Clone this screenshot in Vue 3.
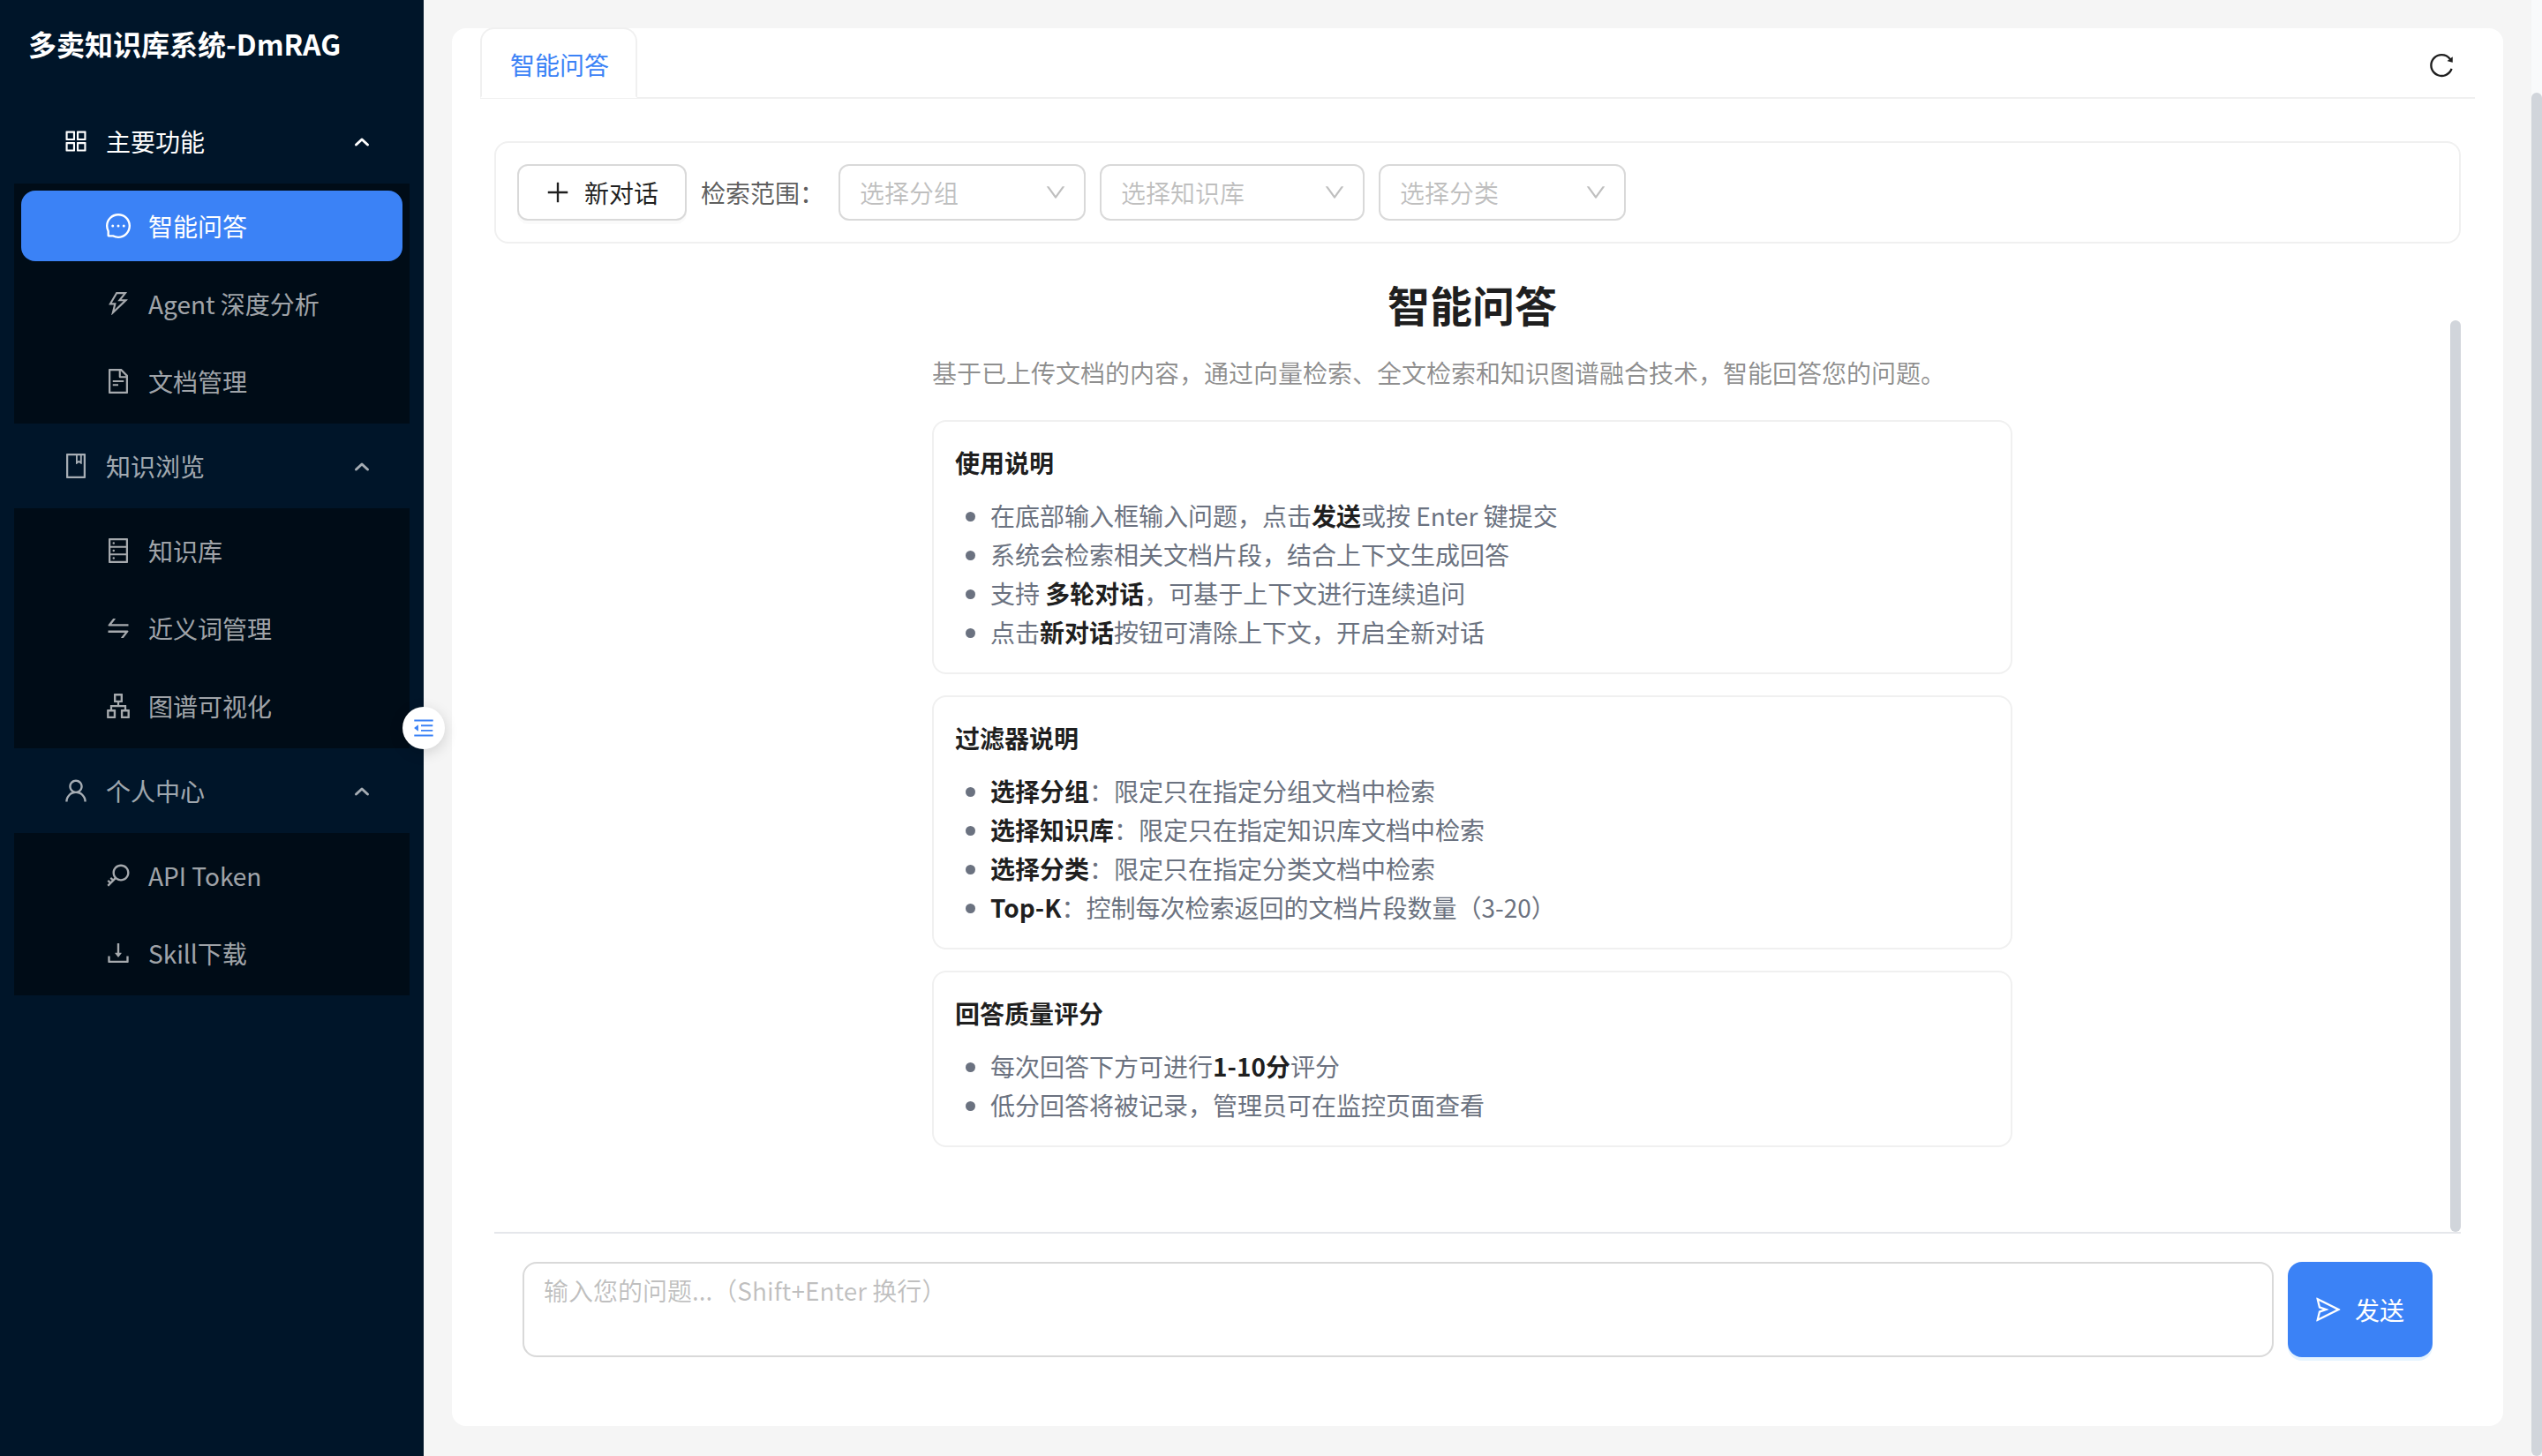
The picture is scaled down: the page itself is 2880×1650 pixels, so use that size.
<script setup>
const icons = {
  appstore: 'M464 144H160c-8.8 0-16 7.2-16 16v304c0 8.8 7.2 16 16 16h304c8.8 0 16-7.2 16-16V160c0-8.8-7.2-16-16-16zm-52 268H212V212h200v200zm452-268H560c-8.8 0-16 7.2-16 16v304c0 8.8 7.2 16 16 16h304c8.8 0 16-7.2 16-16V160c0-8.8-7.2-16-16-16zm-52 268H612V212h200v200zM464 544H160c-8.8 0-16 7.2-16 16v304c0 8.8 7.2 16 16 16h304c8.8 0 16-7.2 16-16V560c0-8.8-7.2-16-16-16zm-52 268H212V612h200v200zm452-268H560c-8.8 0-16 7.2-16 16v304c0 8.8 7.2 16 16 16h304c8.8 0 16-7.2 16-16V560c0-8.8-7.2-16-16-16zm-52 268H612V612h200v200z',
  message: 'M464 512a48 48 0 1096 0 48 48 0 10-96 0zm200 0a48 48 0 1096 0 48 48 0 10-96 0zm-400 0a48 48 0 1096 0 48 48 0 10-96 0zm661.2-173.6c-22.6-53.7-55-101.9-96.3-143.3a444.35 444.35 0 00-143.3-96.3C630.6 75.7 572.2 64 512 64h-2c-60.6.3-119.3 12.3-174.5 35.9a445.35 445.35 0 00-142 96.5c-40.9 41.3-73 89.3-95.2 142.8-23 55.4-34.6 114.3-34.3 174.9A449.4 449.4 0 00112 714v152a46 46 0 0046 46h152.1A449.4 449.4 0 00510 960h2.1c59.9 0 118-11.6 172.7-34.3a444.48 444.48 0 00142.8-95.2c41.3-40.9 73.8-88.7 96.5-142 23.6-55.2 35.6-113.9 35.9-174.5.3-60.9-11.5-120-34.8-175.6zm-151.1 438C704 845.8 611 884 512 884h-1.7c-60.3-.3-120.2-15.3-173.1-43.5l-8.4-4.5H188V695.2l-4.5-8.4C155.3 633.9 140.3 574 140 513.7c-.4-99.7 37.7-193.3 107.6-263.8 69.8-70.5 163.1-109.5 262.8-109.9h1.7c50 0 98.5 9.7 144.2 28.9 44.6 18.7 84.6 45.6 119 80 34.3 34.3 61.3 74.4 80 119 19.4 46.2 29.1 95.2 28.9 145.8-.6 99.6-39.7 192.9-110.1 262.7z',
  thunder: 'M848 359.3H627.7L825.8 109c4.1-5.3.4-13-6.3-13H436c-2.8 0-5.5 1.5-6.9 4L170 547.5c-3.1 5.3.7 12 6.9 12h174.4l-89.4 357.6c-1.9 7.8 7.5 13.3 13.3 7.7L853.5 373c5.2-4.9 1.7-13.7-5.5-13.7zM378.2 732.5l60.3-241H281.1l189.6-327.4h224.6L487 427.4h211L378.2 732.5z',
  file: 'M854.6 288.6L639.4 73.4c-6-6-14.1-9.4-22.6-9.4H192c-17.7 0-32 14.3-32 32v832c0 17.7 14.3 32 32 32h640c17.7 0 32-14.3 32-32V311.3c0-8.5-3.4-16.7-9.4-22.7zM790.2 326H602V137.8L790.2 326zm1.8 562H232V136h302v216a42 42 0 0042 42h216v494zM504 618H320c-4.4 0-8 3.6-8 8v48c0 4.4 3.6 8 8 8h184c4.4 0 8-3.6 8-8v-48c0-4.4-3.6-8-8-8zM312 490v48c0 4.4 3.6 8 8 8h384c4.4 0 8-3.6 8-8v-48c0-4.4-3.6-8-8-8H320c-4.4 0-8 3.6-8 8z',
  book: 'M832 64H192c-17.7 0-32 14.3-32 32v832c0 17.7 14.3 32 32 32h640c17.7 0 32-14.3 32-32V96c0-17.7-14.3-32-32-32zm-260 72h96v209.9L621.5 312 572 347.4V136zm220 752H232V136h280v296.9c0 3.3 1 6.6 3 9.3a15.9 15.9 0 0022.3 3.7l83.8-59.9 81.4 59.4c2.7 2 6 3.1 9.4 3.1 8.8 0 16-7.2 16-16V136h64v752z',
  database: 'M832 64H192c-17.7 0-32 14.3-32 32v832c0 17.7 14.3 32 32 32h640c17.7 0 32-14.3 32-32V96c0-17.7-14.3-32-32-32zm-600 72h560v208H232V136zm560 480H232V408h560v208zm0 272H232V680h560v208zM304 240a40 40 0 1080 0 40 40 0 10-80 0zm0 272a40 40 0 1080 0 40 40 0 10-80 0zm0 272a40 40 0 1080 0 40 40 0 10-80 0z',
  swap: 'M847.9 592H152c-4.4 0-8 3.6-8 8v60c0 4.4 3.6 8 8 8h605.2L612.9 851c-4.1 5.2-.4 13 6.3 13h72.5c4.9 0 9.5-2.2 12.6-6.1l168.8-214.1c16.5-21 1.6-51.8-25.2-51.8zM872 356H266.8l144.3-183c4.1-5.2.4-13-6.3-13h-72.5c-4.9 0-9.5 2.2-12.6 6.1L150.9 380.2c-16.5 21-1.6 51.8 25.1 51.8h696c4.4 0 8-3.6 8-8v-60c0-4.4-3.6-8-8-8z',
  apartment: 'M908 640H804V488c0-4.4-3.6-8-8-8H548v-96h108c8.8 0 16-7.2 16-16V80c0-8.8-7.2-16-16-16H368c-8.8 0-16 7.2-16 16v288c0 8.8 7.2 16 16 16h108v96H228c-4.4 0-8 3.6-8 8v152H116c-8.8 0-16 7.2-16 16v288c0 8.8 7.2 16 16 16h288c8.8 0 16-7.2 16-16V656c0-8.8-7.2-16-16-16H292v-88h440v88H620c-8.8 0-16 7.2-16 16v288c0 8.8 7.2 16 16 16h288c8.8 0 16-7.2 16-16V656c0-8.8-7.2-16-16-16zm-564 76v168H176V716h168zm84-408V140h168v168H428zm420 576H680V716h168v168z',
  user: 'M858.5 763.6a374 374 0 00-80.6-119.5 375.63 375.63 0 00-119.5-80.6c-.4-.2-.8-.3-1.2-.5C719.5 518 760 444.7 760 362c0-137-111-248-248-248S264 225 264 362c0 82.7 40.5 156 102.8 201.1-.4.2-.8.3-1.2.5-44.8 18.9-85 46-119.5 80.6a375.63 375.63 0 00-80.6 119.5A371.7 371.7 0 00136 901.8a8 8 0 008 8.2h60c4.4 0 7.9-3.5 8-7.8 2-77.2 33-149.5 87.8-204.3 56.7-56.7 132-87.9 212.2-87.9s155.5 31.2 212.2 87.9C779 752.7 810 825 812 902.2c.1 4.4 3.6 7.8 8 7.8h60a8 8 0 008-8.2c-1-47.8-10.9-94.3-29.5-138.2zM512 534c-45.9 0-89.1-17.9-121.6-50.4S340 407.9 340 362c0-45.9 17.9-89.1 50.4-121.6S466.1 190 512 190s89.1 17.9 121.6 50.4S684 316.1 684 362c0 45.9-17.9 89.1-50.4 121.6S557.9 534 512 534z',
  key: 'M608 112c-167.9 0-304 136.1-304 304 0 70.3 23.9 135 63.9 186.5l-41.1 41.1-62.3-62.3a8.15 8.15 0 00-11.4 0l-39.8 39.8a8.15 8.15 0 000 11.4l62.3 62.3-44.9 44.9-62.3-62.3a8.15 8.15 0 00-11.4 0l-39.8 39.8a8.15 8.15 0 000 11.4l62.3 62.3-65.3 65.3a8.03 8.03 0 000 11.3l42.3 42.3c3.1 3.1 8.2 3.1 11.3 0l253.6-253.6A304.06 304.06 0 00608 720c167.9 0 304-136.1 304-304S775.9 112 608 112zm161.2 465.2C726.2 620.3 668.9 644 608 644c-60.9 0-118.2-23.7-161.2-66.8-43.1-43-66.8-100.3-66.8-161.2 0-60.9 23.7-118.2 66.8-161.2 43-43.1 100.3-66.8 161.2-66.8 60.9 0 118.2 23.7 161.2 66.8 43.1 43 66.8 100.3 66.8 161.2 0 60.9-23.7 118.2-66.8 161.2z',
  download: 'M505.7 661a8 8 0 0012.6 0l112-141.7c4.1-5.2.4-12.9-6.3-12.9h-74.1V168c0-4.4-3.6-8-8-8h-60c-4.4 0-8 3.6-8 8v338.3H400c-6.7 0-10.4 7.7-6.3 12.9l112 141.8zM878 626h-60c-4.4 0-8 3.6-8 8v154H214V634c0-4.4-3.6-8-8-8h-60c-4.4 0-8 3.6-8 8v198c0 17.7 14.3 32 32 32h684c17.7 0 32-14.3 32-32V634c0-4.4-3.6-8-8-8z',
  down: 'M884 256h-75c-5.1 0-9.9 2.5-12.9 6.6L512 654.2 227.9 262.6c-3-4.1-7.8-6.6-12.9-6.6h-75c-6.5 0-10.3 7.4-6.5 12.7l352.6 486.1c12.8 17.6 39 17.6 51.7 0l352.6-486.1c3.9-5.3.1-12.7-6.4-12.7z',
  plus: 'M482 152h60q8 0 8 8v704q0 8-8 8h-60q-8 0-8-8V160q0-8 8-8zM192 474h672q8 0 8 8v60q0 8-8 8H160q-8 0-8-8v-60q0-8 8-8z',
  reload: 'M909.1 209.3l-56.4 44.1C775.8 155.1 656.2 92 521.9 92 290 92 102.3 279.5 102 511.5 101.7 743.7 289.8 932 521.9 932c181.3 0 335.8-115 394.6-276.1 1.5-4.2-.7-8.9-4.9-10.3l-56.7-19.5a8 8 0 00-10.1 4.8c-1.8 5-3.8 10-5.9 14.9-17.3 41-42.1 77.8-73.7 109.4A344.77 344.77 0 01655.9 829c-42.3 17.9-87.4 27-133.8 27-46.5 0-91.5-9.1-133.8-27A341.5 341.5 0 01279 755.2a342.16 342.16 0 01-73.7-109.4c-17.9-42.4-27-87.4-27-133.9s9.1-91.5 27-133.9c17.3-41 42.1-77.8 73.7-109.4 31.6-31.6 68.4-56.4 109.3-73.8 42.3-17.9 87.4-27 133.8-27 46.5 0 91.5 9.1 133.8 27a341.5 341.5 0 01109.3 73.8c9.9 9.9 19.2 20.4 27.8 31.4l-60.2 47a8 8 0 003 14.1l175.6 43c5 1.2 9.9-2.6 9.9-7.7l.8-180.9c-.1-6.6-7.8-10.3-13-6.2z',
  send: 'M931.4 498.9L94.9 79.5c-3.4-1.7-7.3-2.1-11-1.2a15.99 15.99 0 00-11.7 19.3l86.2 352.2c1.3 5.3 5.2 9.6 10.4 11.3l147.7 50.7-147.6 50.7c-5.2 1.8-9.1 6-10.3 11.3L72.2 926.5c-.9 3.7-.5 7.6 1.2 10.9 3.9 7.9 13.5 11.1 21.5 7.2l836.5-417c3.1-1.5 5.6-4.1 7.2-7.1 3.9-8 .7-17.6-7.2-21.6zM170.8 826.3l50.3-205.6 295.2-101.3c2.3-.8 4.2-2.6 5-5 1.4-4.2-.8-8.7-5-10.2L221.1 403 171 198.2l628 314.9-628.2 313.2z',
  outdent: 'M408 442h480c4.4 0 8-3.6 8-8v-56c0-4.4-3.6-8-8-8H408c-4.4 0-8 3.6-8 8v56c0 4.4 3.6 8 8 8zm-8 204c0 4.4 3.6 8 8 8h480c4.4 0 8-3.6 8-8v-56c0-4.4-3.6-8-8-8H408c-4.4 0-8 3.6-8 8v56zm504-486H120c-4.4 0-8 3.6-8 8v56c0 4.4 3.6 8 8 8h784c4.4 0 8-3.6 8-8v-56c0-4.4-3.6-8-8-8zm0 632H120c-4.4 0-8 3.6-8 8v56c0 4.4 3.6 8 8 8h784c4.4 0 8-3.6 8-8v-56c0-4.4-3.6-8-8-8zM115.4 518.9L271.7 642c5.8 4.6 14.4.5 14.4-6.9V388.9c0-7.4-8.5-11.5-14.4-6.9L115.4 505.1a8.74 8.74 0 000 13.8z',
}

const menu = [
  {
    title: '主要功能',
    icon: 'appstore',
    open: true,
    items: [
      { label: '智能问答', icon: 'message', active: true },
      { label: 'Agent 深度分析', icon: 'thunder' },
      { label: '文档管理', icon: 'file' },
    ],
  },
  {
    title: '知识浏览',
    icon: 'book',
    items: [
      { label: '知识库', icon: 'database' },
      { label: '近义词管理', icon: 'swap' },
      { label: '图谱可视化', icon: 'apartment' },
    ],
  },
  {
    title: '个人中心',
    icon: 'user',
    items: [
      { label: 'API Token', icon: 'key' },
      { label: 'Skill下载', icon: 'download' },
    ],
  },
]

const selects = [
  { text: '选择分组', width: 280 },
  { text: '选择知识库', width: 300 },
  { text: '选择分类', width: 280 },
]
</script>

<template>
  <div class="layout">
    <aside class="sider">
      <div class="logo">多卖知识库系统-DmRAG</div>

      <div v-for="group in menu" :key="group.title" class="group">
        <div class="group-title" :class="{ open: group.open }">
          <svg class="icon" viewBox="64 64 896 896" fill="currentColor"><path :d="icons[group.icon]" /></svg>
          <span>{{ group.title }}</span>
          <svg class="arrow" viewBox="0 0 20 20" fill="none" stroke="currentColor" stroke-width="3" stroke-linecap="round" stroke-linejoin="round"><polyline points="3.5,14 10,8 16.5,14" /></svg>
        </div>
        <div class="sub">
          <div v-for="item in group.items" :key="item.label" class="sub-item" :class="{ active: item.active }">
            <svg class="icon" viewBox="64 64 896 896" fill="currentColor"><path :d="icons[item.icon]" /></svg>
            <span>{{ item.label }}</span>
          </div>
        </div>
      </div>

      <!-- collapse trigger -->
      <div class="trigger">
        <svg viewBox="64 64 896 896" fill="currentColor"><path :d="icons.outdent" /></svg>
      </div>
    </aside>

    <main class="main">
      <section class="card">
        <div class="tabs">
          <div class="tab">智能问答</div>
          <svg class="reload" viewBox="64 64 896 896" fill="currentColor"><path :d="icons.reload" /></svg>
        </div>

        <div class="pane">
          <div class="toolbar">
            <button class="new-btn">
              <svg class="btn-icon" viewBox="64 64 896 896" fill="currentColor"><path :d="icons.plus" /></svg>
              <span>新对话</span>
            </button>
            <span class="scope">检索范围：</span>
            <div v-for="s in selects" :key="s.text" class="select" :style="{ width: s.width + 'px' }">
              <span>{{ s.text }}</span>
              <svg class="chevron" viewBox="64 64 896 896" fill="currentColor"><path :d="icons.down" /></svg>
            </div>
          </div>

          <div class="chat">
            <div class="welcome">
              <h1>智能问答</h1>
              <p class="intro">基于已上传文档的内容，通过向量检索、全文检索和知识图谱融合技术，智能回答您的问题。</p>

              <div class="info">
                <h2>使用说明</h2>
                <ul>
                  <li>在底部输入框输入问题，点击<strong>发送</strong>或按 Enter 键提交</li>
                  <li>系统会检索相关文档片段，结合上下文生成回答</li>
                  <li>支持 <strong>多轮对话</strong>，可基于上下文进行连续追问</li>
                  <li>点击<strong>新对话</strong>按钮可清除上下文，开启全新对话</li>
                </ul>
              </div>

              <div class="info">
                <h2>过滤器说明</h2>
                <ul>
                  <li><strong>选择分组</strong>：限定只在指定分组文档中检索</li>
                  <li><strong>选择知识库</strong>：限定只在指定知识库文档中检索</li>
                  <li><strong>选择分类</strong>：限定只在指定分类文档中检索</li>
                  <li><strong>Top-K</strong>：控制每次检索返回的文档片段数量（3-20）</li>
                </ul>
              </div>

              <div class="info">
                <h2>回答质量评分</h2>
                <ul>
                  <li>每次回答下方可进行<strong>1-10分</strong>评分</li>
                  <li>低分回答将被记录，管理员可在监控页面查看</li>
                </ul>
              </div>
            </div>
            <div class="chat-thumb"></div>
          </div>

          <div class="composer">
            <textarea class="input" placeholder="输入您的问题...（Shift+Enter 换行）"></textarea>
            <button class="send-btn">
              <svg class="btn-icon" viewBox="64 64 896 896" fill="currentColor"><path :d="icons.send" /></svg>
              <span>发送</span>
            </button>
          </div>
        </div>
      </section>
    </main>

    <div class="page-scroll"><div class="page-thumb"></div></div>
  </div>
</template>

<style>
html,
body {
  margin: 0;
  overflow: hidden;
}
</style>

<style scoped>
.layout {
  position: relative;
  display: flex;
  height: 100vh;
  background: #f5f5f5;
  font-family: "Noto Sans CJK SC", sans-serif;
  font-size: 28px;
  line-height: 44px;
  color: rgba(0, 0, 0, 0.88);
}

/* sidebar */
.sider {
  position: relative;
  flex: 0 0 480px;
  background: #001529;
  color: rgba(255, 255, 255, 0.65);
}
.logo {
  height: 98px;
  margin-bottom: 22px;
  padding-left: 32px;
  font-size: 32px;
  font-weight: 700;
  line-height: 98px;
  color: #fff;
}
.group-title {
  display: flex;
  align-items: center;
  height: 80px;
  margin: 0 8px 8px;
  padding: 0 52px 0 64px;
}
.group-title.open {
  color: #fff;
}
.group-title span {
  flex: 1;
}
.group-title + .sub {
  margin-bottom: 8px;
}
.icon {
  flex: none;
  width: 28px;
  height: 28px;
  margin-right: 20px;
}
.arrow {
  flex: none;
  width: 20px;
  height: 20px;
}
.sub {
  margin: 0 16px;
  padding: 8px 0;
  background: #000c17;
}
.sub-item {
  display: flex;
  align-items: center;
  height: 80px;
  margin: 0 8px 8px;
  padding-left: 96px;
  border-radius: 16px;
}
.sub-item:last-child {
  margin-bottom: 0;
}
.sub-item.active {
  background: #3b82f6;
  color: #fff;
}
.trigger {
  position: absolute;
  top: 50%;
  right: -24px;
  display: flex;
  align-items: center;
  justify-content: center;
  width: 48px;
  height: 48px;
  margin-top: -24px;
  border-radius: 50%;
  background: #fff;
  color: #3b82f6;
  box-shadow: 0 4px 16px rgba(0, 0, 0, 0.15);
}
.trigger svg {
  width: 24px;
  height: 24px;
}

/* main card */
.main {
  flex: 1;
  min-width: 0;
  padding: 32px 44px 34px 32px;
}
.card {
  display: flex;
  flex-direction: column;
  box-sizing: border-box;
  height: 100%;
  padding: 0 32px;
  border-radius: 16px;
  background: #fff;
}
.tabs {
  display: flex;
  flex: none;
  align-items: center;
  justify-content: space-between;
  box-sizing: border-box;
  height: 80px;
  border-bottom: 2px solid #f0f0f0;
}
.tab {
  box-sizing: border-box;
  width: 178px;
  height: 80px;
  padding-left: 32px;
  border: 2px solid #f0f0f0;
  border-bottom-color: #fff;
  border-radius: 16px 16px 0 0;
  color: #3b82f6;
  line-height: 80px;
  white-space: nowrap;
}
.reload {
  width: 28px;
  height: 28px;
  margin-top: 6px;
  margin-right: 24px;
}
.pane {
  display: flex;
  flex: 1;
  flex-direction: column;
  min-height: 0;
  margin: 48px 16px 0;
}
.toolbar {
  display: flex;
  flex: none;
  align-items: center;
  gap: 16px;
  padding: 24px;
  border: 2px solid #f0f0f0;
  border-radius: 16px;
}
.new-btn {
  display: flex;
  align-items: center;
  gap: 16px;
  height: 64px;
  padding: 0 30px;
  border: 2px solid #d9d9d9;
  border-radius: 12px;
  background: #fff;
  box-shadow: 0 4px 0 rgba(0, 0, 0, 0.02);
  color: rgba(0, 0, 0, 0.88);
  font: inherit;
}
.btn-icon {
  width: 28px;
  height: 28px;
}
.scope {
  color: rgba(0, 0, 0, 0.65);
}
.select {
  display: flex;
  align-items: center;
  justify-content: space-between;
  box-sizing: border-box;
  height: 64px;
  padding: 0 20px 0 22px;
  border: 2px solid #d9d9d9;
  border-radius: 12px;
  color: rgba(0, 0, 0, 0.25);
}
.chevron {
  width: 24px;
  height: 24px;
}

/* chat area */
.chat {
  position: relative;
  flex: 1;
  min-height: 0;
  padding: 36px 12px 0 0;
}
.chat-thumb {
  position: absolute;
  top: 87px;
  right: 0;
  bottom: 0;
  width: 12px;
  border-radius: 6px;
  background: #d1d5db;
}
.welcome {
  width: 1224px;
  margin: 0 auto;
}
.welcome h1 {
  margin: 0 0 24px;
  font-size: 48px;
  font-weight: 600;
  line-height: 64px;
  text-align: center;
}
.intro {
  margin: 0 0 32px;
  color: rgba(0, 0, 0, 0.45);
}
.info {
  margin-bottom: 24px;
  padding: 24px;
  border: 2px solid #f0f0f0;
  border-radius: 16px;
}
.info h2 {
  margin: 0 0 16px;
  font-size: 28px;
  font-weight: 600;
  line-height: 44px;
}
.info ul {
  margin: 0;
  padding-left: 40px;
  color: #6b7280;
}
.info strong {
  font-weight: 700;
  color: rgba(0, 0, 0, 0.88);
}

/* composer */
.composer {
  display: flex;
  flex: none;
  gap: 16px;
  padding: 32px 32px 78px;
  border-top: 2px solid #e5e7eb;
}
.input {
  flex: 1;
  box-sizing: border-box;
  height: 108px;
  padding: 8px 22px;
  border: 2px solid #d9d9d9;
  border-radius: 16px;
  outline: none;
  resize: none;
  color: rgba(0, 0, 0, 0.88);
  font: inherit;
}
.input::placeholder {
  color: rgba(0, 0, 0, 0.25);
}
.send-btn {
  display: flex;
  align-items: center;
  justify-content: center;
  gap: 16px;
  box-sizing: border-box;
  width: 164px;
  height: 108px;
  border: 0;
  border-radius: 16px;
  background: #3b82f6;
  box-shadow: 0 4px 0 rgba(5, 145, 255, 0.1);
  color: #fff;
  font: inherit;
}

/* page scrollbar */
.page-scroll {
  position: absolute;
  top: 0;
  right: 0;
  bottom: 0;
  width: 12px;
  padding-top: 105px;
  box-sizing: border-box;
  background: #f9fafb;
}
.page-thumb {
  height: 100%;
  border-radius: 6px;
  background: #d1d5db;
}
</style>
